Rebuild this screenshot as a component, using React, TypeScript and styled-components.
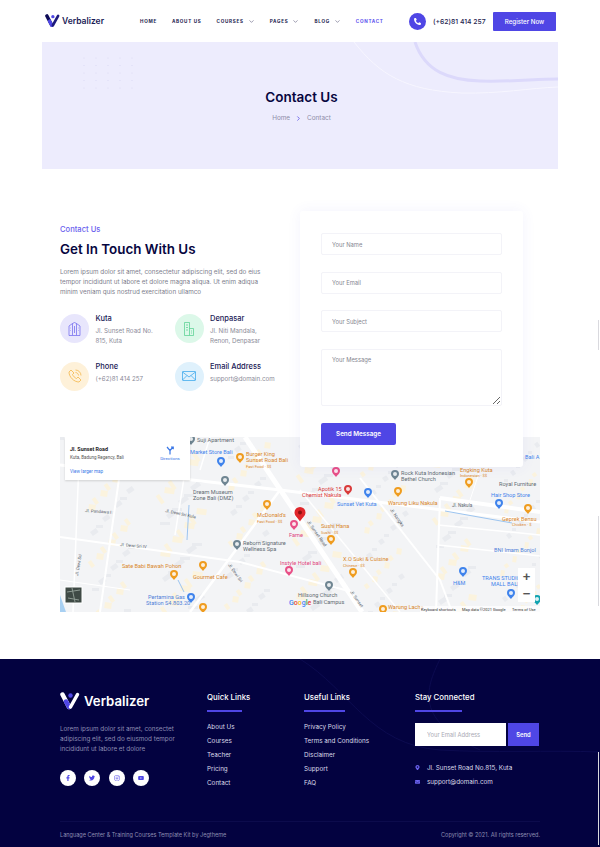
import styled, { createGlobalStyle } from "styled-components";
import {
  FaEnvelope,
  FaFacebookF,
  FaInstagram,
  FaMapMarkerAlt,
  FaPhoneAlt,
  FaTwitter,
  FaYoutube,
} from "react-icons/fa";
import { ChevronDown, ChevronRight } from "lucide-react";

const ACCENT = "#4f46e5";
const NAVY = "#0b0a4a";

const GlobalStyle = createGlobalStyle`
  * { box-sizing: border-box; }
  html, body { margin: 0; padding: 0; background: #fff; }
  body { font-family: "Inter", "Liberation Sans", sans-serif; color: ${NAVY}; overflow-x: hidden; }
  input, textarea, button { font-family: inherit; }
`;

const Page = styled.div`
  width: 600px;
  position: relative;
`;

const Header = styled.header`
  height: 42px;
  padding: 0 44px 0 45px;
  display: flex;
  align-items: center;
`;

const Brand = styled.div`
  display: flex;
  align-items: center;
  gap: 2px;
  width: 95px;
  font-size: 8.5px;
  font-weight: 600;
  color: #1a1956;
`;

const Nav = styled.nav`
  display: flex;
  align-items: center;
  gap: 15px;
  width: 269px;
`;

const NavItem = styled.span<{ $active?: boolean }>`
  display: flex;
  align-items: center;
  gap: 4px;
  font-size: 4.6px;
  font-weight: 700;
  letter-spacing: 0.72px;
  text-transform: uppercase;
  color: ${(props) => (props.$active ? "#5a50ee" : "#24234f")};
`;

const PhoneBox = styled.div`
  display: flex;
  align-items: center;
  gap: 7px;
  width: 84px;
  font-size: 6.8px;
  font-weight: 500;
  color: #24234f;
`;

const PhoneCircle = styled.span`
  width: 17px;
  height: 17px;
  border-radius: 50%;
  background: ${ACCENT};
  color: #fff;
  display: flex;
  align-items: center;
  justify-content: center;
  font-size: 7px;
`;

const RegisterButton = styled.button`
  width: 63px;
  height: 19px;
  border: none;
  border-radius: 1px;
  background: ${ACCENT};
  color: #fff;
  font-size: 6.2px;
  font-weight: 500;
`;

const Hero = styled.section`
  position: relative;
  overflow: hidden;
  margin: 0 42px;
  height: 127px;
  background: #edecfd;
  display: flex;
  flex-direction: column;
  align-items: center;
  padding: 46px 0 0 3px;
`;

const HeroArt = styled.svg`
  position: absolute;
  inset: 0;
`;

const HeroTitle = styled.h1`
  position: relative;
  margin: 0;
  font-size: 13.5px;
  line-height: 18px;
  font-weight: 600;
  color: #07063f;
`;

const Crumbs = styled.div`
  position: relative;
  margin-top: 7px;
  display: flex;
  align-items: center;
  gap: 5px;
  font-size: 6.4px;
  line-height: 10px;
  color: #8d8ca8;
`;

const ContactSection = styled.section`
  padding: 42px 60px 0;
`;

const ContactRow = styled.div`
  display: grid;
  grid-template-columns: 240px 223px;
  align-items: start;
`;

const Intro = styled.div`
  padding-top: 14px;
`;

const Eyebrow = styled.div`
  font-size: 7.6px;
  line-height: 9px;
  font-weight: 500;
  color: #6a61ee;
`;

const Heading = styled.h2`
  margin: 6px 0 0;
  font-size: 13.4px;
  line-height: 19px;
  font-weight: 600;
  color: #07063f;
`;

const Lead = styled.p`
  margin: 8px 0 0;
  font-size: 6.3px;
  line-height: 10px;
  color: #7d7d8c;
`;

const InfoGrid = styled.div`
  margin-top: 17px;
  display: grid;
  grid-template-columns: 114.5px 1fr;
  row-gap: 15.5px;
`;

const InfoItem = styled.div`
  display: flex;
  gap: 6.5px;
  min-height: 29px;
`;

const InfoCircle = styled.div<{ $bg: string }>`
  flex: none;
  width: 29px;
  height: 29px;
  border-radius: 50%;
  background: ${(props) => props.$bg};
  display: flex;
  align-items: center;
  justify-content: center;
`;

const InfoTitle = styled.div`
  font-size: 7.5px;
  line-height: 10px;
  font-weight: 500;
  color: #1a1956;
`;

const InfoText = styled.div`
  margin-top: 2px;
  font-size: 6.2px;
  line-height: 10px;
  color: #8a8a98;
`;

const FormCard = styled.form`
  position: relative;
  z-index: 1;
  height: 256px;
  padding: 22px 21px;
  background: #fff;
  border-radius: 3px;
  box-shadow: 0 0 14px rgba(90, 80, 220, 0.07);
  display: flex;
  flex-direction: column;
  gap: 16.5px;
`;

const Field = styled.input`
  flex: none;
  height: 22px;
  padding: 0 10px;
  border: 1px solid #f3f3f8;
  border-radius: 2px;
  font-size: 5.8px;
  outline: none;
  &::placeholder {
    color: #85858f;
  }
`;

const MessageField = styled.textarea`
  flex: none;
  height: 57.5px;
  padding: 6px 10px;
  border: 1px solid #f3f3f8;
  border-radius: 2px;
  font-size: 5.8px;
  outline: none;
  &::placeholder {
    color: #85858f;
  }
`;

const SendMessage = styled.button`
  width: 75px;
  height: 23px;
  border: none;
  border-radius: 2px;
  background: ${ACCENT};
  color: #fff;
  font-size: 6.3px;
  font-weight: 600;
`;

const MapFrame = styled.div`
  position: relative;
  margin-top: -30px;
  height: 175px;
  overflow: hidden;
  background: #f3f4f6;
`;

const MapArt = styled.svg`
  display: block;
  font-family: "Roboto", "Liberation Sans", sans-serif;
`;

const MapCard = styled.div`
  position: absolute;
  left: 5px;
  top: 0;
  width: 125px;
  height: 43px;
  padding: 9px 5px 0;
  background: #fff;
  box-shadow: 0 1px 2px rgba(0, 0, 0, 0.15);
  font-family: "Roboto", "Liberation Sans", sans-serif;
  display: grid;
  grid-template-columns: 1fr 30px;
`;

const MapCardTitle = styled.div`
  font-size: 5.4px;
  line-height: 7px;
  font-weight: 700;
  color: #222;
`;

const MapCardText = styled.div`
  margin-top: 2px;
  font-size: 4.5px;
  line-height: 6px;
  color: #555;
  white-space: nowrap;
`;

const MapCardLink = styled.div`
  margin-top: 8px;
  font-size: 4.6px;
  line-height: 6px;
  color: #3b78e7;
`;

const Directions = styled.div`
  display: flex;
  flex-direction: column;
  align-items: center;
  gap: 1px;
  font-size: 4.4px;
  color: #3b78e7;
`;

const ZoomBox = styled.div`
  position: absolute;
  right: 5px;
  top: 131px;
  width: 17px;
  height: 34px;
  background: #fff;
  display: flex;
  flex-direction: column;
  align-items: center;
  justify-content: space-around;
  font-family: "Liberation Sans", sans-serif;
  font-size: 13px;
  line-height: 13px;
  font-weight: 700;
  color: #555;
`;

const Footer = styled.footer`
  position: relative;
  overflow: hidden;
  margin-top: 47px;
  height: 188px;
  padding: 30px 60px 0;
  background: #030240;
  color: #fff;
`;

const FooterArt = styled.svg`
  position: absolute;
  left: 0;
  top: 0;
`;

const FooterGrid = styled.div`
  position: relative;
  display: grid;
  grid-template-columns: 147px 97px 111px 125px;
  height: 132px;
`;

const FooterBrand = styled.div`
  display: flex;
  align-items: center;
  gap: 4px;
  height: 24px;
  font-size: 13.2px;
  font-weight: 600;
`;

const FooterLead = styled.p`
  margin: 11px 0 0;
  width: 125px;
  font-size: 6.3px;
  line-height: 10.2px;
  color: #8e8eb2;
`;

const Socials = styled.div`
  margin-top: 15px;
  display: flex;
  gap: 8.3px;
`;

const SocialLink = styled.span`
  width: 16px;
  height: 16px;
  border-radius: 50%;
  background: #fff;
  color: ${ACCENT};
  display: flex;
  align-items: center;
  justify-content: center;
  font-size: 6px;
`;

const ColumnTitle = styled.h4`
  margin: 3px 0 0;
  font-size: 7.8px;
  line-height: 10px;
  font-weight: 500;
  color: #fff;
`;

const Rule = styled.div<{ $width: number }>`
  margin-top: 8px;
  width: ${(props) => props.$width}px;
  height: 1.5px;
  background: ${ACCENT};
`;

const LinkList = styled.div`
  margin-top: 8px;
  display: flex;
  flex-direction: column;
`;

const FooterLink = styled.span`
  font-size: 6.3px;
  line-height: 14.2px;
  color: #dcdcea;
`;

const Subscribe = styled.div`
  margin-top: 11px;
  display: flex;
  gap: 2px;
`;

const SubscribeInput = styled.input`
  width: 91px;
  height: 23px;
  padding: 0 12px;
  border: none;
  background: #fff;
  font-size: 5.8px;
  outline: none;
  &::placeholder {
    color: #a9a9b4;
  }
`;

const SubscribeButton = styled.button`
  width: 31px;
  height: 23px;
  border: none;
  background: ${ACCENT};
  color: #fff;
  font-size: 5.8px;
  font-weight: 600;
`;

const ContactLine = styled.div`
  display: flex;
  align-items: center;
  gap: 7px;
  height: 14px;
  font-size: 6.3px;
  color: #dcdcea;
  svg {
    width: 5px;
    color: #6a61ee;
    font-size: 5.5px;
  }
`;

const ContactLines = styled.div`
  margin-top: 15px;
`;

const BottomBar = styled.div`
  position: relative;
  border-top: 1px solid #0c0b4c;
  height: 26px;
  display: flex;
  align-items: center;
  justify-content: space-between;
  font-size: 5.55px;
  color: #8e8eb2;
`;

const EdgeMark = styled.div<{ $top: number; $height: number }>`
  position: absolute;
  z-index: 2;
  right: 1px;
  top: ${(props) => props.$top}px;
  width: 1px;
  height: ${(props) => props.$height}px;
  background: #d9d9de;
`;

function Logo({ size, light }: { size: number; light?: boolean }) {
  return (
    <svg width={size} height={size * 0.9} viewBox="0 0 40 36" fill="none">
      <path d="M5 5 L18 30" stroke={light ? "#fff" : "#0d0b56"} strokeWidth="9" strokeLinecap="round" />
      <path d="M12 19 L18 30" stroke={ACCENT} strokeWidth="9" strokeLinecap="round" />
      <path d="M35 5 L21 30" stroke={light ? "#fff" : "#1d1a7c"} strokeWidth="7" strokeLinecap="round" />
      <circle cx="21" cy="7" r="4.5" fill={ACCENT} />
    </svg>
  );
}

function BuildingIcon() {
  return (
    <svg width="13" height="14" viewBox="0 0 26 28" fill="none" stroke="#6a61ee" strokeWidth="1.4">
      <path d="M2 8 L9 3 V27 H2 Z M9 3 L13 1 L17 3 V27 H9 M17 3 L24 8 V27 H17" />
      <path d="M5 12 H6 M5 17 H6 M20 12 H21 M20 17 H21 M13 8 V22" />
    </svg>
  );
}

function TowerIcon() {
  return (
    <svg width="12" height="14" viewBox="0 0 24 28" fill="none" stroke="#4fcf8c" strokeWidth="1.4">
      <path d="M3 1 H13 V27 H3 Z M13 13 H21 V27 H13" />
      <path d="M6 6 H10 M6 11 H10 M6 16 H10 M16 18 H18 M16 22 H18" />
    </svg>
  );
}

function RingIcon() {
  return (
    <svg width="14" height="14" viewBox="0 0 28 28" fill="none" stroke="#f3b23f" strokeWidth="1.5">
      <path d="M6 2 L2 6 C2 16 12 26 22 26 L26 22 L20 16 L17 19 C14 18 10 14 9 11 L12 8 Z" />
      <path d="M15 7 C18 7 21 10 21 13 M15 2 C21 2 26 7 26 13" />
    </svg>
  );
}

function EnvelopeIcon() {
  return (
    <svg width="14" height="10" viewBox="0 0 28 20" fill="none" stroke="#3aa7ec" strokeWidth="1.5">
      <rect x="1" y="1" width="26" height="18" rx="1" />
      <path d="M1 2 L14 12 L27 2 M1 18 L10 9 M27 18 L18 9" />
    </svg>
  );
}

const PIN_COLORS: Record<string, string> = {
  orange: "#ef9c1f",
  blue: "#3f83ec",
  grey: "#6f8592",
  pink: "#e84f87",
  red: "#d93a3a",
  teal: "#12a3b0",
};

const PINS: [number, number, string][] = [
  [240, 458, "orange"], [267, 505, "orange"], [174, 575, "orange"], [203, 566, "orange"],
  [203, 608, "orange"], [331, 540, "orange"], [353, 573, "orange"], [398, 492, "orange"],
  [469, 483, "orange"], [528, 509, "orange"], [383, 610, "orange"],
  [221, 462, "blue"], [368, 493, "blue"], [499, 504, "blue"], [463, 572, "blue"],
  [511, 594, "blue"], [191, 598, "blue"],
  [225, 481, "grey"], [237, 545, "grey"], [395, 475, "grey"], [329, 586, "grey"], [191, 440, "grey"],
  [294, 525, "pink"], [289, 571, "pink"], [336, 472, "pink"], [161, 437, "pink"],
  [348, 490, "red"], [537, 600, "teal"],
];

const LABELS: [number, number, string, string, number?][] = [
  [246, 456, "Burger King", "#d9862a"], [246, 462, "Sunset Road Bali", "#d9862a"], [246, 468, "Fast Food · $$", "#d9862a", 4],
  [257, 517, "McDonald's", "#d9862a"], [257, 523, "Fast Food · $$", "#d9862a", 4],
  [122, 568, "Sate Babi Bawah Pohon", "#d9862a"], [193, 579, "Gourmet Cafe", "#d9862a"],
  [460, 472, "Engking Kuta", "#d9862a"], [460, 477, "Indonesian · $$", "#d9862a", 4],
  [388, 505, "Warung Liku Nakula", "#d9862a"], [321, 528, "Sushi Hana", "#d9862a"], [321, 534, "Sushi · $$", "#d9862a", 4],
  [343, 561, "X.O Suki & Cuisine", "#d9862a"], [343, 567, "Chinese · $$", "#d9862a", 4],
  [502, 521, "Geprek Bensu", "#d9862a"], [512, 526, "Chicken · $", "#d9862a", 4],
  [388, 609, "Warung Lacha", "#d9862a"],
  [197, 442, "Suji Apartment", "#5f6b73"], [193, 494, "Dream Museum", "#5f6b73"], [193, 500, "Zone Bali (DMZ)", "#5f6b73"],
  [243, 545, "Reborn Signature", "#5f6b73"], [243, 551, "Wellness Spa", "#5f6b73"],
  [401, 475, "Rock Kuta Indonesian", "#5f6b73"], [401, 481, "Bethel Church", "#5f6b73"],
  [499, 486, "Royal Furniture", "#5f6b73"], [298, 597, "Hillsong Church", "#5f6b73"], [313, 604, "Bali Campus", "#5f6b73"],
  [452, 507, "Jl. Nakula", "#5f6b73", 4.6],
  [190, 454, "Market Store Bali", "#3f83ec"], [337, 506, "Sunset Vet Kuta", "#3f83ec"], [491, 497, "Hair Shop Store", "#3f83ec"],
  [482, 580, "TRANS STUDIO", "#3f83ec"], [491, 586, "MALL BALI", "#3f83ec"], [453, 585, "H&M", "#3f83ec"],
  [494, 552, "BNI Imam Bonjol", "#4f7fd8"], [148, 599, "Pertamina Gas", "#4f7fd8"], [146, 605, "Station S4.803.20", "#4f7fd8"],
  [525, 459, "Bali A", "#3f83ec"],
  [289, 537, "Fame", "#e0457d"], [280, 565, "Instyle Hotel bali", "#e0457d"],
  [318, 491, "Apotik 15", "#d93a3a"], [302, 497, "Chemist Nakula", "#d93a3a"],
];

const STREETS: [number, number, string, number][] = [
  [307, 522, "Jl. Sunset Road", 55], [350, 592, "Jl. Sunset", 55], [390, 510, "Jl. Nangka", 55],
  [165, 512, "Jl. Dewi Sri Kula", 12], [120, 546, "Jl. Dewi Sri IV", 5], [85, 512, "Jl. Pandawa I", 4],
  [228, 565, "Jl. Dewi Sri", 55], [78, 576, "Jl. Dewi Sri", -80],
];

const ROADS: [string, number][] = [
  ["M245 437 L362 612", 5],
  ["M60 465 L280 490 L540 522", 3],
  ["M280 490 L190 612", 2.5],
  ["M60 537 L240 562 L345 590", 2],
  ["M125 437 L100 612", 2],
  ["M80 437 L73 612", 1.5],
  ["M360 478 L440 580 L452 612", 2],
  ["M440 498 L436 612", 2],
  ["M440 498 L540 512", 4],
  ["M438 525 L540 535", 1.5],
  ["M438 545 L540 556", 1.5],
  ["M190 440 L175 535", 1.5],
  ["M300 490 L400 612", 1.5],
  ["M60 580 L130 590", 1],
  ["M210 437 L200 470", 1.5],
  ["M480 470 L470 500", 1],
];

// blocks of buildings, a plain repeatable scatter
const BLOCKS = Array.from({ length: 280 }, (_, i) => ({
  x: 60 + ((i * 137) % 480),
  y: 437 + ((i * 71) % 175),
  w: 4 + ((i * 13) % 7),
  h: 3 + ((i * 7) % 4),
  tone: i % 2 === 0 ? "#e9ebef" : "#fbf3de",
  rot: [0, 8, -35, 55][i % 4],
}));

function MapDrawing() {
  return (
    <MapArt width="480" height="175" viewBox="60 437 480 175">
      <rect x="60" y="437" width="480" height="175" fill="#f3f4f6" />
      {BLOCKS.map((b, i) => (
        <rect
          key={i}
          x={b.x}
          y={b.y}
          width={b.w}
          height={b.h}
          fill={b.tone}
          transform={`rotate(${b.rot} ${b.x} ${b.y})`}
        />
      ))}
      {ROADS.map(([d, w]) => (
        <path key={d} d={d} stroke="#fff" strokeWidth={w} fill="none" />
      ))}
      <path d="M445 511 L512 523" stroke="#9cc4ef" strokeWidth="1" fill="none" />
      <path d="M189 505 L187 540 M178 580 L184 592" stroke="#9cc4ef" strokeWidth="1" fill="none" />
      <path d="M60 595 L66 612 L60 612 Z" fill="#a8d0f2" />
      {STREETS.map(([x, y, t, r]) => (
        <text key={t + x} x={x} y={y} fontSize="4.4" fill="#59636b" transform={`rotate(${r} ${x} ${y})`}>
          {t}
        </text>
      ))}
      {LABELS.map(([x, y, t, c, s]) => (
        <text key={t + x + y} x={x} y={y} fontSize={s ?? 5.6} fill={c}>
          {t}
        </text>
      ))}
      {PINS.map(([x, y, c]) => (
        <g key={`${x}-${y}`} transform={`translate(${x} ${y})`}>
          <path d="M0 -5 a4 4 0 0 1 4 4 c0 2.6 -2.6 4 -4 6 c-1.4 -2 -4 -3.4 -4 -6 a4 4 0 0 1 4 -4z" fill={PIN_COLORS[c]} />
          <circle cy="-1" r="2" fill="#fff" fillOpacity="0.85" />
        </g>
      ))}
      <g transform="translate(300 515)">
        <path d="M0 -8 a5.5 5.5 0 0 1 5.5 5.5 c0 3.6 -3.6 5.6 -5.5 9 c-1.9 -3.4 -5.5 -5.4 -5.5 -9 a5.5 5.5 0 0 1 5.5 -5.5z" fill="#e0262b" />
        <circle cy="-2.5" r="2" fill="#8f1010" />
      </g>
      <rect x="65" y="587" width="17" height="16" fill="#3f4a45" stroke="#fff" strokeWidth="1" />
      <path d="M67 592 L80 590 M68 598 L79 600 M72 588 L75 602" stroke="#8d9a92" strokeWidth="1" />
      <text x="289" y="605" fontSize="7" fontWeight="500">
        <tspan fill="#4285f4">G</tspan>
        <tspan fill="#ea4335">o</tspan>
        <tspan fill="#fbbc05">o</tspan>
        <tspan fill="#4285f4">g</tspan>
        <tspan fill="#34a853">l</tspan>
        <tspan fill="#ea4335">e</tspan>
      </text>
      <rect x="420" y="606" width="120" height="6" fill="#fff" fillOpacity="0.75" />
      <text x="421" y="611" fontSize="4" fill="#333">Keyboard shortcuts</text>
      <text x="462" y="611" fontSize="4" fill="#333">Map data ©2021 Google</text>
      <text x="512" y="611" fontSize="4" fill="#333">Terms of Use</text>
    </MapArt>
  );
}

const FOOTER_LINKS = ["About Us", "Courses", "Teacher", "Pricing", "Contact"];
const USEFUL_LINKS = ["Privacy Policy", "Terms and Conditions", "Disclaimer", "Support", "FAQ"];

function App() {
  return (
    <Page>
      <GlobalStyle />
      <EdgeMark $top={320} $height={30} />
      <EdgeMark $top={516} $height={90} />
      <EdgeMark $top={752} $height={93} />
      <Header>
        <Brand>
          <Logo size={15} />
          Verbalizer
        </Brand>
        <Nav>
          <NavItem>Home</NavItem>
          <NavItem>About Us</NavItem>
          <NavItem>Courses <ChevronDown size={7} strokeWidth={1.5} /></NavItem>
          <NavItem>Pages <ChevronDown size={7} strokeWidth={1.5} /></NavItem>
          <NavItem>Blog <ChevronDown size={7} strokeWidth={1.5} /></NavItem>
          <NavItem $active>Contact</NavItem>
        </Nav>
        <PhoneBox>
          <PhoneCircle><FaPhoneAlt /></PhoneCircle>
          (+62)81 414 257
        </PhoneBox>
        <RegisterButton>Register Now</RegisterButton>
      </Header>

      <Hero>
        <HeroArt width="516" height="127" viewBox="42 42 516 127" fill="none">
          <path d="M354 42 C380 75 405 90 461 93 C500 94 530 88 558 87" stroke="#f7f6ff" strokeWidth="1" />
          <path d="M415 42 C425 72 450 80 480 81 C510 82 535 79 558 79" stroke="#dcd9fb" strokeWidth="3" />
          {[0, 1, 2, 3, 4].map((row) =>
            [0, 1, 2, 3, 4].map((col) => (
              <circle key={`${row}-${col}`} cx={84 + col * 12} cy={58 + row * 7.5} r="0.6" fill="#dad8f3" />
            ))
          )}
        </HeroArt>
        <HeroTitle>Contact Us</HeroTitle>
        <Crumbs>
          Home
          <ChevronRight size={7} strokeWidth={2.5} color={ACCENT} />
          Contact
        </Crumbs>
      </Hero>

      <ContactSection>
        <ContactRow>
          <Intro>
            <Eyebrow>Contact Us</Eyebrow>
            <Heading>Get In Touch With Us</Heading>
            <Lead>
              Lorem ipsum dolor sit amet, consectetur adipiscing elit, sed do eius
              <br />
              tempor incididunt ut labore et dolore magna aliqua. Ut enim adiqua
              <br />
              minim veniam quis nostrud exercitation ullamco
            </Lead>
            <InfoGrid>
              <InfoItem>
                <InfoCircle $bg="#e8e6fc"><BuildingIcon /></InfoCircle>
                <div>
                  <InfoTitle>Kuta</InfoTitle>
                  <InfoText>Jl. Sunset Road No.<br />815, Kuta</InfoText>
                </div>
              </InfoItem>
              <InfoItem>
                <InfoCircle $bg="#dcf8e9"><TowerIcon /></InfoCircle>
                <div>
                  <InfoTitle>Denpasar</InfoTitle>
                  <InfoText>Jl. Niti Mandala,<br />Renon, Denpasar</InfoText>
                </div>
              </InfoItem>
              <InfoItem>
                <InfoCircle $bg="#fef1d9"><RingIcon /></InfoCircle>
                <div>
                  <InfoTitle>Phone</InfoTitle>
                  <InfoText>(+62)81 414 257</InfoText>
                </div>
              </InfoItem>
              <InfoItem>
                <InfoCircle $bg="#dff1fc"><EnvelopeIcon /></InfoCircle>
                <div>
                  <InfoTitle>Email Address</InfoTitle>
                  <InfoText>support@domain.com</InfoText>
                </div>
              </InfoItem>
            </InfoGrid>
          </Intro>
          <FormCard>
            <Field placeholder="Your Name" />
            <Field placeholder="Your Email" />
            <Field placeholder="Your Subject" />
            <MessageField placeholder="Your Message" />
            <SendMessage type="button">Send Message</SendMessage>
          </FormCard>
        </ContactRow>
        <MapFrame>
          <MapDrawing />
          <MapCard>
            <div>
              <MapCardTitle>Jl. Sunset Road</MapCardTitle>
              <MapCardText>Kuta, Badung Regency, Bali</MapCardText>
              <MapCardLink>View larger map</MapCardLink>
            </div>
            <Directions>
              <svg width="8" height="9" viewBox="0 0 16 18" fill="none" stroke="#3b78e7" strokeWidth="2.4">
                <path d="M2 2 L8 9 V17 M14 2 L8 9 M10 2 H14.5 V6.5" />
              </svg>
              Directions
            </Directions>
          </MapCard>
          <ZoomBox>
            <span>+</span>
            <span>−</span>
          </ZoomBox>
        </MapFrame>
      </ContactSection>

      <Footer>
        <FooterArt width="600" height="188" viewBox="0 659 600 188" fill="none" stroke="#0c0b50" strokeWidth="1">
          <path d="M300 659 C350 690 370 745 440 750 C490 753 550 750 600 752" />
          <path d="M440 659 C425 690 415 720 480 750" />
        </FooterArt>
        <FooterGrid>
          <div>
            <FooterBrand>
              <Logo size={20} light />
              Verbalizer
            </FooterBrand>
            <FooterLead>
              Lorem ipsum dolor sit amet, consectet adipiscing elit, sed do eiusmod tempor incididunt ut labore et dolore
            </FooterLead>
            <Socials>
              <SocialLink><FaFacebookF /></SocialLink>
              <SocialLink><FaTwitter /></SocialLink>
              <SocialLink><FaInstagram /></SocialLink>
              <SocialLink><FaYoutube /></SocialLink>
            </Socials>
          </div>
          <div>
            <ColumnTitle>Quick Links</ColumnTitle>
            <Rule $width={35} />
            <LinkList>
              {FOOTER_LINKS.map((link) => (
                <FooterLink key={link}>{link}</FooterLink>
              ))}
            </LinkList>
          </div>
          <div>
            <ColumnTitle>Useful Links</ColumnTitle>
            <Rule $width={41} />
            <LinkList>
              {USEFUL_LINKS.map((link) => (
                <FooterLink key={link}>{link}</FooterLink>
              ))}
            </LinkList>
          </div>
          <div>
            <ColumnTitle>Stay Connected</ColumnTitle>
            <Rule $width={47} />
            <Subscribe>
              <SubscribeInput placeholder="Your Email Address" />
              <SubscribeButton type="button">Send</SubscribeButton>
            </Subscribe>
            <ContactLines>
              <ContactLine><FaMapMarkerAlt /> Jl. Sunset Road No.815, Kuta</ContactLine>
              <ContactLine><FaEnvelope /> support@domain.com</ContactLine>
            </ContactLines>
          </div>
        </FooterGrid>
        <BottomBar>
          <span>Language Center &amp; Training Courses Template Kit by Jegtheme</span>
          <span>Copyright © 2021. All rights reserved.</span>
        </BottomBar>
      </Footer>
    </Page>
  );
}

export default App;
